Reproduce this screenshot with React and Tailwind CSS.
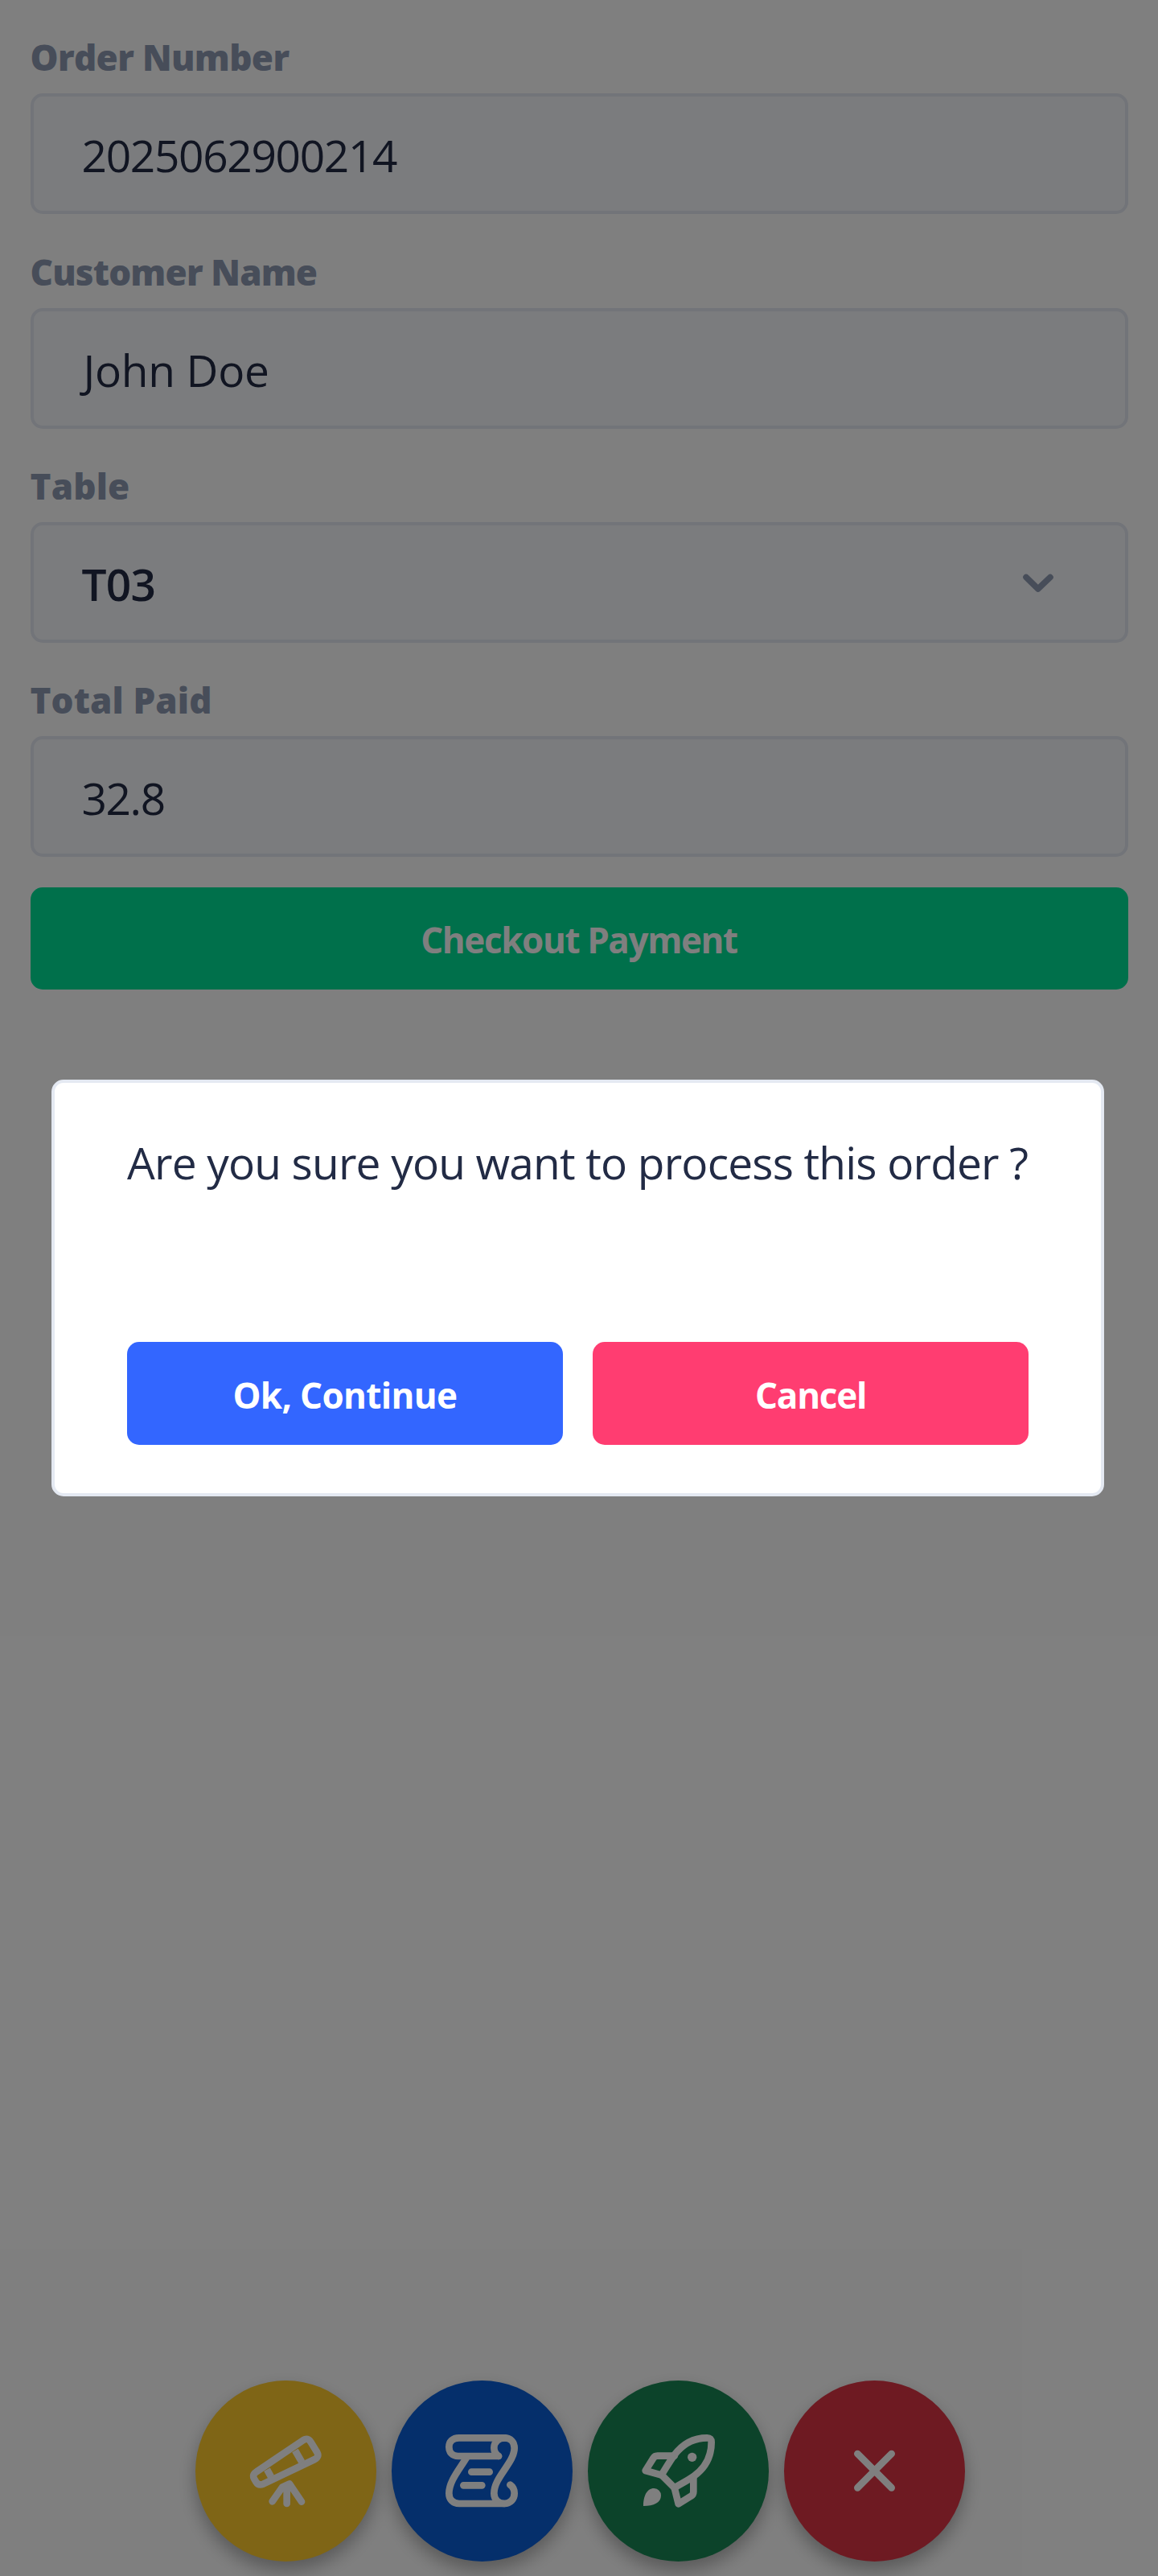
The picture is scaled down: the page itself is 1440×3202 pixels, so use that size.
import React from "react";

const fields = [
  { label: "Order Number", value: "2025062900214", labelClass: "-tracking-[0.64px]", valueClass: "-tracking-[1.32px]" },
  { label: "Customer Name", value: "John Doe", labelClass: "-tracking-[0.84px]", valueClass: "pl-[2px] -tracking-[0.3px]" },
  { label: "Table", value: "T03", select: true, labelClass: "tracking-[0.15px]", valueClass: "font-semibold -tracking-[0.8px]" },
  { label: "Total Paid", value: "32.8", labelClass: "tracking-[0.1px]", valueClass: "-tracking-[1.4px]" },
];

function Chevron() {
  return (
    <svg className="mt-[3px] mr-[86px] h-[30px] w-[44px]" viewBox="0 0 44 30" fill="none" stroke="#8f9bb3" strokeWidth="7.6" strokeLinecap="round" strokeLinejoin="round">
      <path d="M7 7.5 21.8 22 37 7.5" />
    </svg>
  );
}

function Field({ label, value, select, labelClass, valueClass }) {
  return (
    <div className="flex flex-col gap-[15px] pt-[41.25px]">
      <div className={`h-[60px] text-[44px] leading-[60px] font-extrabold text-[#8f9bb3] ${labelClass}`}>{label}</div>
      <div className="flex h-[150px] items-center justify-between rounded-[15px] border-4 border-[#e4e9f2] bg-[#f7f9fc] pl-[60px]">
        <span className={`pt-[3px] text-[55px] leading-[75px] text-[#222b45] ${valueClass}`}>{value}</span>
        {select && <Chevron />}
      </div>
    </div>
  );
}

function Fab({ className, children }) {
  return (
    <button className={`flex size-[225px] shrink-0 items-center justify-center rounded-full shadow-[0_11px_22px_rgba(0,0,0,0.3)] ${className}`}>
      <svg className="size-[225px]" viewBox="0 0 675 675" fill="none" stroke="white" strokeWidth="26" strokeLinecap="round" strokeLinejoin="round">
        {children}
      </svg>
    </button>
  );
}

function Telescope() {
  return (
    <g transform="translate(-42 -57)">
      <path d="M445 279 270 397Q252 408 262 425L268 435Q277 450 295 443L487 351Q505 341 496 325L472 286Q461 269 445 279Z" />
      <path d="M414 318 439 361M309 389 324 416" strokeLinecap="butt" />
      <path d="M329 508 367 454 393 442 438 509M383 516V450" />
    </g>
  );
}

function Scroll() {
  return (
    <g transform="translate(-39 -57)">
      <path d="M438 339H287C266 339 253 325 253 305S267 271 290 271H460C483 271 497 287 497 309C497 364 421 417 421 478C421 501 438 516 460 516S497 499 497 478C497 464 491 453 481 446" />
      <path d="M460 271C438 271 421 287 421 308C421 321 428 332 438 339" />
      <path d="M318 345C291 390 253 433 253 478C253 501 268 516 291 516H460M337 398H404M307 448H376" />
    </g>
  );
}

function Rocket() {
  return (
    <g transform="translate(-39 -57)">
      <path d="M484 271Q500 271 500 287C500 343 473 386 434 414C413 429 390 440 362 457L314 409C331 382 344 359 360 337C389 297 430 271 484 271Z" />
      <path d="M362 338H299Q288 338 283 347L254 393 314 410M362 457 377 517 424 488Q433 483 433 472V416" />
      <circle cx="428" cy="343" r="17" fill="white" stroke="none" />
      <path d="M246 525C246 490 258 459 286 459A26 26 0 0 1 312 486C312 512 285 525 246 525Z" fill="white" stroke="none" />
    </g>
  );
}

export default function App() {
  return (
    <div className="relative flex h-[3202px] w-[1440px] flex-col overflow-hidden bg-white font-['Open_Sans',sans-serif]">
      <main className="flex flex-col px-[37.5px]">
        {fields.map((f) => (
          <Field key={f.label} {...f} />
        ))}
        <button className="mt-[37.5px] flex h-[127.5px] items-center justify-center rounded-[15px] bg-[#00e096] pt-[3px] text-[44px] leading-[60px] font-bold -tracking-[1.4px] text-white">
          Checkout Payment
        </button>
      </main>

      <nav className="mt-auto mb-[18px] ml-[3px] flex justify-center gap-[18.75px]">
        <Fab className="bg-[#ffca2c]"><Telescope /></Fab>
        <Fab className="bg-[#0b5ed7]"><Scroll /></Fab>
        <Fab className="bg-[#198754]"><Rocket /></Fab>
        <Fab className="bg-[#dc3545]">
          <path d="M274 273 401 400M401 273 274 400" />
        </Fab>
      </nav>

      <div className="absolute inset-0 flex items-center justify-center bg-black/50 pr-[3px]">
        <section className="flex h-[517.5px] w-[1309px] flex-col rounded-[15px] border-4 border-[#e4e9f2] bg-white px-[90px] pt-[61px]">
          <p className="text-[55px] leading-[76.5px] whitespace-nowrap -tracking-[0.81px] text-[#222b45]">
            Are you sure you want to process this order ?
          </p>
          <div className="mt-[184.5px] grid grid-cols-2 gap-[37.5px]">
            <button className="flex h-[127.5px] items-center justify-center rounded-[15px] bg-[#3366ff] pt-[3px] text-[44px] leading-[60px] font-bold -tracking-[0.67px] text-white">
              Ok, Continue
            </button>
            <button className="flex h-[127.5px] items-center justify-center rounded-[15px] bg-[#ff3d71] pt-[3px] text-[44px] leading-[60px] font-bold -tracking-[1.2px] text-white">
              Cancel
            </button>
          </div>
        </section>
      </div>
    </div>
  );
}
